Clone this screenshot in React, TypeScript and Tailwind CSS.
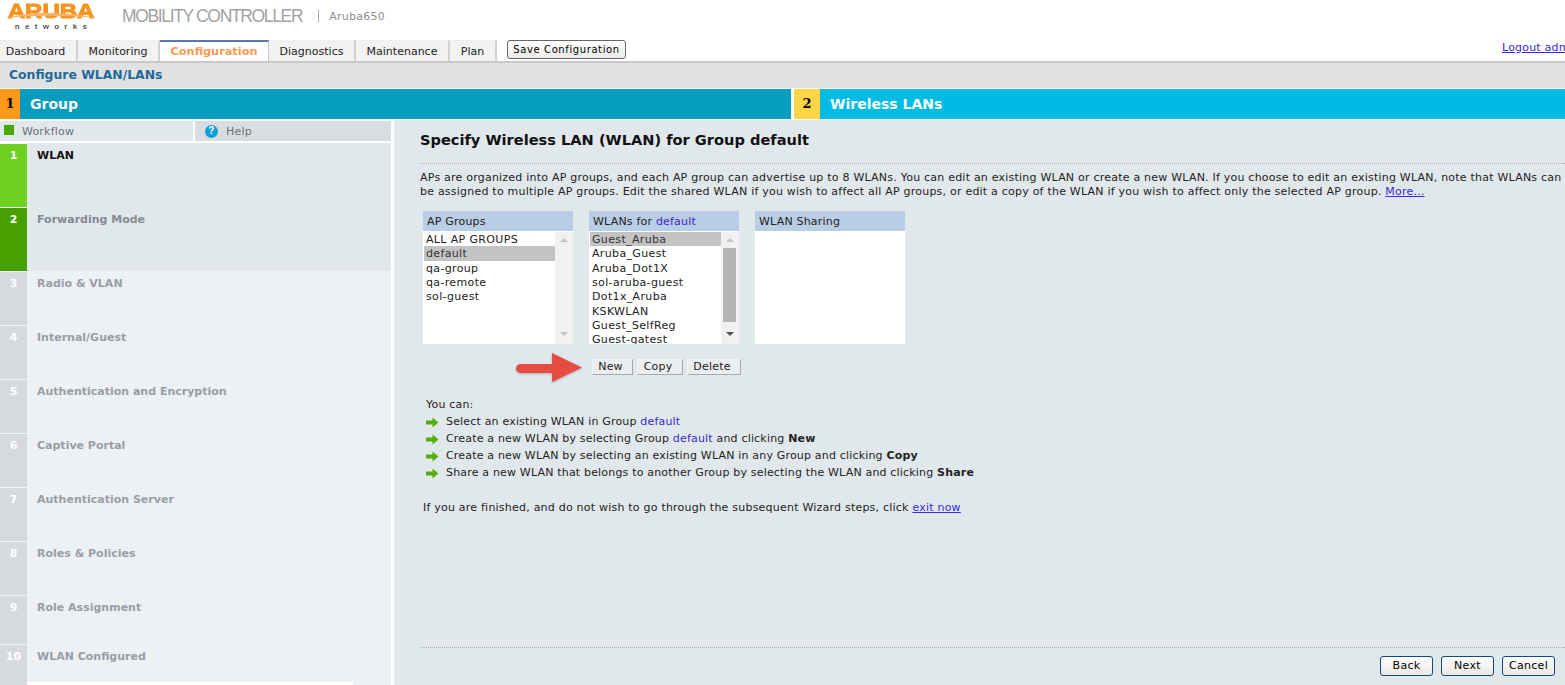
const tabs = ["Dashboard", "Monitoring", "Configuration", "Diagnostics", "Maintenance", "Plan"];

const tabWidths: Record<string, string> = {
  Dashboard: "w-[78px] pr-[5px]",
  Monitoring: "w-[82px]",
  Configuration: "w-[109px]",
  Diagnostics: "w-[87px]",
  Maintenance: "w-[94px]",
  Plan: "w-[47px]",
};

const steps = [
  { n: "1", label: "WLAN", h: "h-[64px]", box: "bg-[#6fd11f]", bg: "bg-[#e1e8ec]", text: "text-[#111111]" },
  { n: "2", label: "Forwarding Mode", h: "h-[64px]", box: "bg-[#46a000]", bg: "bg-[#e1e8ec]", text: "text-[#858a94]" },
  { n: "3", label: "Radio & VLAN", h: "h-[54px]", box: "bg-[#d6d9dd]", bg: "bg-[#edf1f4]", text: "text-[#999da5]" },
  { n: "4", label: "Internal/Guest", h: "h-[54px]", box: "bg-[#d6d9dd]", bg: "bg-[#edf1f4]", text: "text-[#999da5]" },
  { n: "5", label: "Authentication and Encryption", h: "h-[54px]", box: "bg-[#d6d9dd]", bg: "bg-[#edf1f4]", text: "text-[#999da5]" },
  { n: "6", label: "Captive Portal", h: "h-[54px]", box: "bg-[#d6d9dd]", bg: "bg-[#edf1f4]", text: "text-[#999da5]" },
  { n: "7", label: "Authentication Server", h: "h-[54px]", box: "bg-[#d6d9dd]", bg: "bg-[#edf1f4]", text: "text-[#999da5]" },
  { n: "8", label: "Roles & Policies", h: "h-[54px]", box: "bg-[#d6d9dd]", bg: "bg-[#edf1f4]", text: "text-[#999da5]" },
  { n: "9", label: "Role Assignment", h: "h-[49px]", box: "bg-[#d6d9dd]", bg: "bg-[#edf1f4]", text: "text-[#999da5]" },
  { n: "10", label: "WLAN Configured", h: "h-[38px]", box: "bg-[#d6d9dd]", bg: "bg-[#edf1f4]", text: "text-[#999da5]" },
];

const apGroups = ["ALL AP GROUPS", "default", "qa-group", "qa-remote", "sol-guest"];
const wlans = ["Guest_Aruba", "Aruba_Guest", "Aruba_Dot1X", "sol-aruba-guest", "Dot1x_Aruba", "KSKWLAN", "Guest_SelfReg", "Guest-gatest"];

function GreenArrow() {
  return (
    <svg width="13" height="11" viewBox="0 0 13 11" className="shrink-0">
      <path d="M0 3.5h6.5V0.5L12.5 5.5L6.5 10.5V7.5H0z" fill="#56ad0c" />
    </svg>
  );
}

function ListBox({
  items,
  selected,
  thumb,
}: {
  items: string[];
  selected: string;
  thumb?: boolean;
}) {
  return (
    <div className="flex h-[113px] overflow-hidden bg-white pt-px pl-px">
      <div className="w-[131px] shrink-0 text-[11px] tracking-[0.35px]">
        {items.map((item) => (
          <div
            key={item}
            className={`h-[14.33px] pl-[2px] leading-[16px] whitespace-nowrap ${item === selected ? "bg-[#c3c3c3] text-[#333333]" : "text-[#222222]"}`}
          >
            {item}
          </div>
        ))}
      </div>
      <div className="ml-auto flex w-[18px] flex-col items-center bg-[#f1f1f1] pt-[6px] pb-[8px]">
        <div className="h-0 w-0 shrink-0 border-x-[4px] border-b-[4px] border-x-transparent border-b-[#c4c4c4]" />
        <div className="flex-1 self-stretch pt-[6px] pr-[3px] pl-[2px]">
          {thumb && <div className="h-[74px] bg-[#b5b5b5]" />}
        </div>
        <div className={`h-0 w-0 shrink-0 border-x-[4px] border-t-[4px] border-x-transparent ${thumb ? "border-t-[#505050]" : "border-t-[#c4c4c4]"}`} />
      </div>
    </div>
  );
}

function SmallButton({ label, width }: { label: string; width: string }) {
  return (
    <button className={`h-[16px] ${width} border border-[#f4f4f4] border-r-[#a9a9a9] border-b-[#a9a9a9] bg-[#ebeef0] pr-[4px] text-[11px] leading-[14px] text-[#222222]`}>
      {label}
    </button>
  );
}

function WizardButton({ label }: { label: string }) {
  return (
    <button className="h-[20px] w-[53px] rounded-[3px] border border-[#0f4a85] bg-linear-to-b from-white to-[#ebe8e3] text-[11px] leading-[18px] tracking-[0.3px] text-black">
      {label}
    </button>
  );
}

export default function App() {
  return (
    <div className="h-[685px] w-full overflow-hidden bg-white font-['DejaVu_Sans','Verdana',sans-serif] text-[11px] text-[#222222]">
      {/* top header */}
      <div className="flex h-[40px] items-start">
        <div className="relative ml-[6px] flex w-[90px] flex-col items-center">
          <span className="mt-[1px] h-[20px] scale-x-[1.2] font-['Liberation_Sans',sans-serif] text-[20px] leading-[20px] font-black text-[#f7941e] [-webkit-text-stroke:1px_#f7941e]">
            ARUBA
          </span>
          <svg width="90" height="8" viewBox="0 0 90 8" className="absolute top-[11px] left-0">
            <path d="M0 7C22 1 60 0 90 7C60 4 25 4 0 7z" fill="#fbb36a" />
          </svg>
          <span className="mt-[1px] pl-[5px] font-['Liberation_Sans',sans-serif] text-[8px] leading-[9px] font-bold tracking-[5.3px] text-[#555555]">
            networks
          </span>
        </div>
        <span className="ml-[26px] pt-[6px] font-['Liberation_Sans',sans-serif] text-[17.5px] leading-[20px] font-normal tracking-[-1.35px] whitespace-nowrap text-[#a2a2a2]">
          MOBILITY CONTROLLER
        </span>
        <span className="mt-[10px] ml-[16px] h-[12px] w-px bg-[#a8a8a8]" />
        <span className="ml-[10px] pt-[10px] text-[11px] leading-[14px] tracking-[0.25px] text-[#8c8c8c]">Aruba650</span>
      </div>

      {/* tab row */}
      <div className="relative flex h-[23px] items-stretch border-b-2 border-[#c9c9c9]">
        {tabs.map((tab) => (
          <div
            key={tab}
            className={
              tab === "Configuration"
                ? `${tabWidths[tab]} flex items-center justify-center border-t-2 border-r border-t-[#5a78b0] border-r-[#c9c9c9] bg-white pt-[2px] text-[11.3px] font-bold text-[#f79a55]`
                : `${tabWidths[tab]} flex items-center justify-center border-t border-r-2 border-t-[#eeeeee] border-r-[#d0d0d0] bg-[#f2f2f2] pt-[2px] text-[11px] text-[#222222]`
            }
          >
            {tab}
          </div>
        ))}
        <button className="ml-[10px] h-[19px] w-[119px] rounded-[3px] border border-[#666666] bg-linear-to-b from-white to-[#ecebe8] text-[10px] tracking-[0.6px] text-black">
          Save Configuration
        </button>
        <a className="absolute top-[0px] left-[1502px] whitespace-nowrap text-[11px] tracking-[0.2px] text-[#3a28e0] underline">
          Logout admin
        </a>
      </div>

      {/* page title */}
      <div className="flex h-[25px] items-center bg-[#e1e1e1] pl-[9px] text-[12.4px] font-bold text-[#1d6a9a]">
        Configure WLAN/LANs
      </div>

      {/* wizard step bar */}
      <div className="mt-px flex h-[30px] gap-[3px]">
        <div className="flex w-[791px] items-stretch bg-[#069cbd]">
          <span className="flex w-[20px] items-center justify-center bg-[#fd9a1c] font-['DejaVu_Serif',serif] text-[13px] font-bold text-black">
            1
          </span>
          <span className="flex items-center pl-[10px] text-[14px] font-bold text-white">Group</span>
        </div>
        <div className="flex flex-1 items-stretch bg-[#00bbe4]">
          <span className="flex w-[26px] items-center justify-center bg-[#fed546] font-['DejaVu_Serif',serif] text-[13px] font-bold text-black">
            2
          </span>
          <span className="flex items-center pl-[10px] text-[14px] font-bold text-white">Wireless LANs</span>
        </div>
      </div>

      <div className="mt-px flex h-[565px] gap-[3px]">
        {/* sidebar */}
        <div className="flex w-[391px] shrink-0 flex-col">
          <div className="flex h-[23px] shrink-0 border-t border-b-2 border-white">
            <div className="flex w-[193px] items-start gap-[8px] bg-[#e1e8ec] pt-[3px] pl-[4px] text-[11px] tracking-[0.2px] text-[#6b7075]">
              <span className="mt-[1px] h-[10px] w-[10px] bg-[#46a800]" />
              <span>Workflow</span>
            </div>
            <div className="ml-[2px] flex flex-1 items-center gap-[8px] bg-[#d9dde1] pl-[10px] text-[11px] tracking-[0.2px] text-[#6b7075]">
              <span className="flex h-[13px] w-[13px] items-center justify-center rounded-full bg-[#0e9ed6] font-['Liberation_Sans',sans-serif] text-[10px] leading-none font-bold text-white">
                ?
              </span>
              <span className="pt-[3px]">Help</span>
            </div>
          </div>
          {steps.map((step) => (
            <div key={step.n} className={`flex ${step.h} shrink-0 ${step.bg}`}>
              <div className={`w-[27px] shrink-0 border-t border-[#f4f6f7] pt-[4px] text-center text-[11px] font-bold text-white ${step.box}`}>
                {step.n}
              </div>
              <div className={`pt-[5px] pl-[10px] text-[11px] font-bold ${step.text}`}>{step.label}</div>
            </div>
          ))}
          <div className="flex flex-1">
            <div className="w-[27px] bg-[#d6d9dd]" />
            <div className="w-[326px] bg-white" />
            <div className="flex-1 bg-[#edf1f4]" />
          </div>
        </div>

        {/* main panel */}
        <div className="flex min-w-0 flex-1 flex-col bg-[#e1e8ec] pl-[26px]">
          <h1 className="mt-[10px] h-[20px] text-[14.6px] leading-[20px] font-bold whitespace-nowrap text-[#111111]">
            Specify Wireless LAN (WLAN) for Group default
          </h1>
          <div className="mt-[13px] border-t border-dotted border-[#a9adb0]" />
          <p className="mt-[7px] w-[1160px] text-[11px] leading-[14px] tracking-[0.22px] text-[#222222]">
            <span className="block whitespace-nowrap">
              APs are organized into AP groups, and each AP group can advertise up to 8 WLANs. You can edit an existing WLAN or create a new WLAN. If you choose to edit an existing WLAN, note that WLANs can
            </span>
            <span className="block whitespace-nowrap">
              be assigned to multiple AP groups. Edit the shared WLAN if you wish to affect all AP groups, or edit a copy of the WLAN if you wish to affect only the selected AP group.{" "}
              <a className="text-[#3a28e0] underline">More...</a>
            </span>
          </p>

          <div className="mt-[12px] ml-[3px] flex gap-[16px] tracking-[0.2px]">
            <div className="w-[150px]">
              <div className="flex h-[20px] items-center bg-[#b9cde4] pt-[2px] pl-[4px] text-[#222222]">AP Groups</div>
              <ListBox items={apGroups} selected="default" />
            </div>
            <div className="w-[150px]">
              <div className="flex h-[20px] items-center bg-[#b9cde4] pt-[2px] pl-[4px] text-[#222222]">
                WLANs for&nbsp;<span className="text-[#3a28c8]">default</span>
              </div>
              <ListBox items={wlans} selected="Guest_Aruba" thumb />
            </div>
            <div className="w-[150px]">
              <div className="flex h-[20px] items-center bg-[#b9cde4] pt-[2px] pl-[4px] text-[#222222]">WLAN Sharing</div>
              <div className="h-[113px] bg-white" />
            </div>
          </div>

          <div className="mt-[13px] flex h-[20px] items-center">
            <svg width="66" height="29" viewBox="0 0 66 29" className="ml-[96px] shrink-0 overflow-visible drop-shadow-[0_1px_1px_rgba(0,0,0,0.25)]">
              <path d="M4.5 11H36V0l30 14.5L36 29V20H4.5a4.5 4.5 0 0 1 0-9z" fill="#e74c43" />
            </svg>
            <div className="ml-[10px] flex gap-[4px] tracking-[0.2px]">
              <SmallButton label="New" width="w-[41px]" />
              <SmallButton label="Copy" width="w-[46px]" />
              <SmallButton label="Delete" width="w-[54px]" />
            </div>
          </div>

          <div className="mt-[21px] ml-[6px] text-[11px] leading-[14px] tracking-[0.2px]">You can:</div>
          <div className="mt-[3px] ml-[6px] flex flex-col gap-[3px] text-[11px] leading-[14px] tracking-[0.18px]">
            <div className="flex items-center gap-[7px]">
              <GreenArrow />
              <span>
                Select an existing WLAN in Group <span className="text-[#3a28c8]">default</span>
              </span>
            </div>
            <div className="flex items-center gap-[7px]">
              <GreenArrow />
              <span>
                Create a new WLAN by selecting Group <span className="text-[#3a28c8]">default</span> and clicking <b>New</b>
              </span>
            </div>
            <div className="flex items-center gap-[7px]">
              <GreenArrow />
              <span>
                Create a new WLAN by selecting an existing WLAN in any Group and clicking <b>Copy</b>
              </span>
            </div>
            <div className="flex items-center gap-[7px]">
              <GreenArrow />
              <span>
                Share a new WLAN that belongs to another Group by selecting the WLAN and clicking <b>Share</b>
              </span>
            </div>
          </div>

          <div className="mt-[21px] ml-[3px] text-[11px] leading-[14px] tracking-[0.22px]">
            If you are finished, and do not wish to go through the subsequent Wizard steps, click{" "}
            <a className="text-[#3a28e0] underline">exit now</a>
          </div>

          <div className="mt-[132px] border-t border-dotted border-[#a9adb0]" />
          <div className="mt-[8px] flex justify-end gap-[8px] pr-[10px]">
            <WizardButton label="Back" />
            <WizardButton label="Next" />
            <WizardButton label="Cancel" />
          </div>
        </div>
      </div>
    </div>
  );
}
